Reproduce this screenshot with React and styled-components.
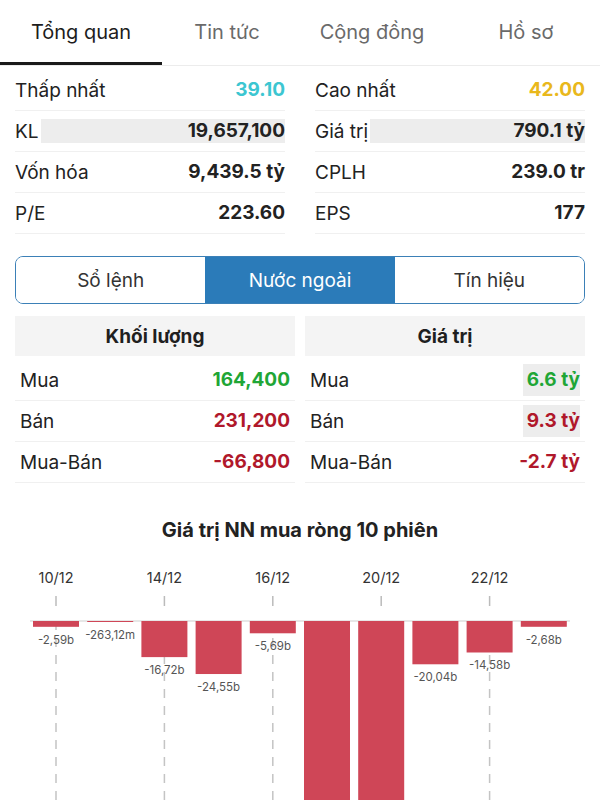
import React from 'react';
import styled, { createGlobalStyle } from 'styled-components';

const GlobalStyle = createGlobalStyle`
  body {
    margin: 0;
    background: #fff;
    font-family: Inter, "Noto Sans", sans-serif;
    color: #222;
  }
`;

const Page = styled.div`
  width: 600px;
  height: 800px;
  overflow: hidden;
  background: #fff;
`;

const Tabs = styled.div`
  display: flex;
  height: 66px;
  border-bottom: 1px solid #ececec;
  box-sizing: border-box;
`;

const Tab = styled.div`
  width: ${p => p.$w}px;
  display: flex;
  align-items: center;
  justify-content: center;
  font-size: 20px;
  color: ${p => (p.$active ? '#1d1d1d' : '#6a6a6a')};
  border-bottom: 3px solid ${p => (p.$active ? '#1a1a1a' : 'transparent')};
  box-sizing: border-box;
  padding-top: 2px;
`;

const StatsGrid = styled.div`
  display: grid;
  grid-template-columns: 1fr 1fr;
  column-gap: 30px;
  padding: 0 15px;
  margin-top: 4px;
`;

const Column = styled.div`
  display: flex;
  flex-direction: column;
`;

const StatRow = styled.div`
  display: flex;
  align-items: center;
  height: 41px;
  border-bottom: 1px solid #f0f0f0;
  box-sizing: border-box;
  font-size: 19px;
`;

const Label = styled.span`
  color: #222;
  white-space: nowrap;
`;

const Value = styled.span`
  flex: 1;
  text-align: right;
  font-weight: 700;
  color: ${p => p.$color || '#222'};
  background: ${p => (p.$shade ? '#ededed' : 'transparent')};
  line-height: 24px;
  margin-left: 2px;
`;

const Segmented = styled.div`
  display: flex;
  margin: 22px 15px 0;
  height: 48px;
  border: 1.5px solid #3b80b7;
  border-radius: 8px;
  overflow: hidden;
  box-sizing: border-box;
`;

const Segment = styled.div`
  flex: 1;
  display: flex;
  align-items: center;
  justify-content: center;
  font-size: 19px;
  color: ${p => (p.$active ? '#fff' : '#333')};
  background: ${p => (p.$active ? '#2b7bb9' : '#fff')};
`;

const ForeignGrid = styled.div`
  display: grid;
  grid-template-columns: 1fr 1fr;
  column-gap: 10px;
  padding: 0 15px;
  margin-top: 12px;
`;

const TableHead = styled.div`
  height: 40px;
  margin-bottom: 4px;
  background: #f4f4f4;
  display: flex;
  align-items: center;
  justify-content: center;
  font-weight: 700;
  font-size: 19px;
  color: #1f1f1f;
`;

const TableRow = styled.div`
  display: flex;
  align-items: center;
  justify-content: space-between;
  height: 41px;
  padding: 0 5px;
  border-bottom: 1px solid #f0f0f0;
  box-sizing: border-box;
  font-size: 19px;
`;

const Amount = styled.span`
  font-weight: 700;
  color: ${p => p.$color};
  background: ${p => (p.$shade ? '#ededed' : 'transparent')};
  line-height: 32px;
  padding-left: ${p => (p.$shade ? '4px' : '0')};
`;

const ChartTitle = styled.div`
  margin-top: 35px;
  text-align: center;
  font-size: 20px;
  font-weight: 700;
  color: #222;
`;

const ChartSvg = styled.svg`
  display: block;
  margin-top: 27px;
`;

const GREEN = '#1fa636';
const RED = '#b0182b';

const left = [
  { label: 'Thấp nhất', value: '39.10', color: '#3cc6d1' },
  { label: 'KL', value: '19,657,100', shade: true },
  { label: 'Vốn hóa', value: '9,439.5 tỷ' },
  { label: 'P/E', value: '223.60' },
];

const right = [
  { label: 'Cao nhất', value: '42.00', color: '#e9b81c' },
  { label: 'Giá trị', value: '790.1 tỷ', shade: true },
  { label: 'CPLH', value: '239.0 tr' },
  { label: 'EPS', value: '177' },
];

const volume = [
  { label: 'Mua', value: '164,400', color: GREEN },
  { label: 'Bán', value: '231,200', color: RED },
  { label: 'Mua-Bán', value: '-66,800', color: RED },
];

const worth = [
  { label: 'Mua', value: '6.6 tỷ', color: GREEN, shade: true },
  { label: 'Bán', value: '9.3 tỷ', color: RED, shade: true },
  { label: 'Mua-Bán', value: '-2.7 tỷ', color: RED },
];

const bars = [
  { v: 2.69, text: '-2,59b' },
  { v: 0.263, text: '-263,12m' },
  { v: 16.72, text: '-16,72b' },
  { v: 24.55, text: '-24,55b' },
  { v: 5.69, text: '-5,69b' },
  { v: 120 },
  { v: 120 },
  { v: 20.04, text: '-20,04b' },
  { v: 14.58, text: '-14,58b' },
  { v: 2.68, text: '-2,68b' },
];

const dates = ['10/12', '14/12', '16/12', '20/12', '22/12'];

const NetChart = () => {
  const zero = 52;
  const scale = 2.16;
  const step = 54.2;
  const x0 = 56;
  return (
    <ChartSvg width="600" height="240" viewBox="0 0 600 240">
      {dates.map((d, i) => {
        const x = x0 + i * 2 * step;
        return (
          <g key={d}>
            <text x={x} y="14" textAnchor="middle" fontSize="14.5" fill="#333" fontFamily="Inter, sans-serif">{d}</text>
            <line x1={x} y1="27" x2={x} y2="37" stroke="#bbb" strokeWidth="1.5" />
            <line x1={x} y1={zero} x2={x} y2="240" stroke="#c4c4c4" strokeWidth="1.5" strokeDasharray="9 8" />
          </g>
        );
      })}
      <line x1="30" y1={zero} x2="570" y2={zero} stroke="#cfcfcf" strokeWidth="1" />
      {bars.map((b, i) => {
        const cx = x0 + i * step;
        const h = Math.max(1, b.v * scale);
        return (
          <g key={i}>
            <rect x={cx - 23} y={zero} width="46" height={h} fill="#cf4657" />
            {b.text && (
              <text
                x={cx}
                y={zero + h + 17}
                textAnchor="middle"
                fontSize="11.5"
                fill="#555"
                fontFamily="Inter, sans-serif"
              >
                {b.text}
              </text>
            )}
          </g>
        );
      })}
    </ChartSvg>
  );
};

export default function App() {
  return (
    <Page>
      <GlobalStyle />
      <Tabs>
        <Tab $w={162} $active>Tổng quan</Tab>
        <Tab $w={130}>Tin tức</Tab>
        <Tab $w={160}>Cộng đồng</Tab>
        <Tab $w={148}>Hồ sơ</Tab>
      </Tabs>

      <StatsGrid>
        {[left, right].map((col, ci) => (
          <Column key={ci}>
            {col.map(r => (
              <StatRow key={r.label}>
                <Label>{r.label}</Label>
                <Value $color={r.color} $shade={r.shade}>{r.value}</Value>
              </StatRow>
            ))}
          </Column>
        ))}
      </StatsGrid>

      <Segmented>
        <Segment>Sổ lệnh</Segment>
        <Segment $active>Nước ngoài</Segment>
        <Segment>Tín hiệu</Segment>
      </Segmented>

      <ForeignGrid>
        {[
          { title: 'Khối lượng', rows: volume },
          { title: 'Giá trị', rows: worth },
        ].map(col => (
          <Column key={col.title}>
            <TableHead>{col.title}</TableHead>
            {col.rows.map(r => (
              <TableRow key={r.label}>
                <Label>{r.label}</Label>
                <Amount $color={r.color} $shade={r.shade}>{r.value}</Amount>
              </TableRow>
            ))}
          </Column>
        ))}
      </ForeignGrid>

      <ChartTitle>Giá trị NN mua ròng 10 phiên</ChartTitle>
      <NetChart />
    </Page>
  );
}
